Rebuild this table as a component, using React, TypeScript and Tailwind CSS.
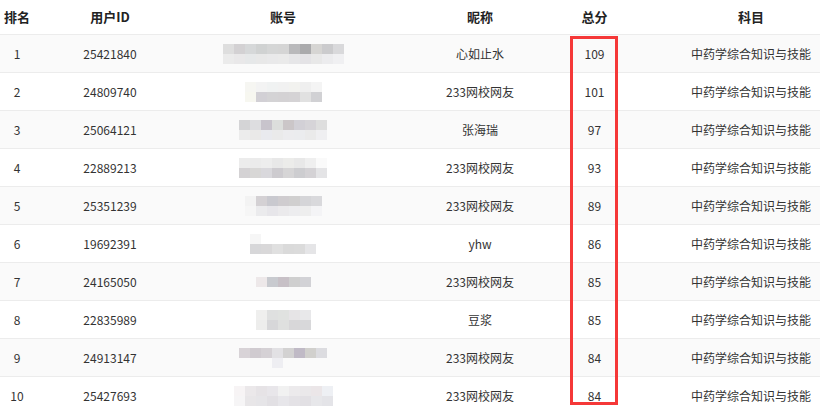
const rows = [
  { rank: 1, id: "25421840", nick: "心如止水", score: 109, top: ["#dedede", "#d3d1d3", "#d6d8d9", "#d0d2d2", "#d5d6d6", "#d5d5d5", "#b9b9bb", "#aaaaac", "#d6d5d3", "#cbcbcd", "#d9d9db"], bot: ["#ebebeb", "#e9e8e9", "#e6e8e9", "#e8e8e8", "#e9e9ea", "#eaeaea", "#e6e6e8", "#e4e3e6", "#e8e8e8", "#ececee", "#f0f0f2"] },
  { rank: 2, id: "24809740", nick: "233网校网友", score: 101, top: ["#f6f6f2", "#f3f3f3", "#f0f2f2", "#f1f1f1", "#f2f2ef", "#efefef", "#f4f4f4"], bot: ["#f7f7f0", "#d2d0d5", "#d4d3d5", "#d4d2d4", "#d5d3d5", "#e1e1e1", "#d1d1d4"] },
  { rank: 3, id: "25064121", nick: "张海瑞", score: 97, top: ["#d4d4d6", "#dddde0", "#c8c4cc", "#dcdedc", "#cbc6c8", "#d2d0d6", "#d6d4d8", "#dedede"], bot: ["#ececec", "#eae9e8", "#e9eaee", "#eaeaea", "#ececee", "#ebecee", "#eaeaea", "#efeff1"] },
  { rank: 4, id: "22889213", nick: "233网校网友", score: 93, top: ["#ececec", "#ebebeb", "#ededed", "#e8e8e8", "#ececea", "#e8e8e8", "#efefef", "#fafafa"], bot: ["#d4d2d4", "#d8d7d6", "#d9d8dc", "#cdcbcf", "#d6d5d6", "#cdcdd0", "#d4d2d5", "#e4e4e6"] },
  { rank: 5, id: "25351239", nick: "233网校网友", score: 89, top: ["#f3f3f3", "#d4d1d4", "#c9c9cf", "#cfcccf", "#d0cfcf", "#d5d5d8", "#d9d9dc"], bot: ["#f6f6f6", "#ebebed", "#e7e6ea", "#ebeaec", "#ededef", "#eeeeee", "#f4f4f6"] },
  { rank: 6, id: "19692391", nick: "yhw", score: 86, top: ["#f6f6f6", "#ffffff", "#ffffff", "#ffffff", "#ffffff", "#ffffff"], bot: ["#d7d7d9", "#d9d8d9", "#e0e0e0", "#dadada", "#dbdbdb", "#e5e5e7"] },
  { rank: 7, id: "24165050", nick: "233网校网友", score: 85, top: ["#ede8e9", "#c8cacf", "#c7c0c6", "#cfcfcf", "#d2d2d6"], bot: [] },
  { rank: 8, id: "22835989", nick: "豆浆", score: 85, top: ["#efefee", "#dfe0e0", "#e0e2e0", "#e6e4e6", "#e8e8ea"], bot: ["#ededec", "#d7d7d9", "#dfe0df", "#d8d7d9", "#d8d8da"] },
  { rank: 9, id: "24913147", nick: "233网校网友", score: 84, top: ["#d8d3d7", "#d0cbd0", "#d5d1d5", "#e2e1e4", "#d3d2d2", "#c0bac6", "#d1d0cd", "#dcdce0"], bot: ["#fafafa", "#fafafa", "#fafafa", "#eeeef2", "#fafafa", "#fafafa", "#fafafa", "#fafafa"] },
  { rank: 10, id: "25427693", nick: "233网校网友", score: 84, top: ["#f7f4f5", "#ebe8ea", "#e6e3e6", "#e8e6ea", "#f1f1f1", "#eceaec", "#eae8ea", "#ebe6e8", "#eef0f4"], bot: ["#f6f5f6", "#e8e6e8", "#e6e5e8", "#e2e0e4", "#e7e6ea", "#e4e2e6", "#e2e0e4", "#e7e7ea", "#e4e4e8"] },
];

const cols = "grid grid-cols-[34px_152px_194px_200px_60px_180px]";
const cell = "flex items-center justify-center";

const Mosaic = ({ top, bot }: { top: string[]; bot: string[] }) => (
  <div className="flex flex-col">
    <div className="flex">
      {top.map((c, i) => (
        <div key={i} className="w-[11px] h-[10px]" style={{ backgroundColor: c }} />
      ))}
    </div>
    {bot.length > 0 && (
      <div className="flex">
        {bot.map((c, i) => (
          <div key={i} className="w-[11px] h-[10px]" style={{ backgroundColor: c }} />
        ))}
      </div>
    )}
  </div>
);

const App = () => {
  return (
    <div
      className="relative w-[820px] h-[410px] overflow-hidden bg-white text-[12px] text-[#333]"
      style={{ fontFamily: '"Noto Sans CJK SC", "Noto Sans", sans-serif' }}
    >
      <div className={`${cols} h-[35px] border-b border-[#ececec] text-[13px] font-bold text-[#222]`}>
        <div className={cell}>排名</div>
        <div className={cell}>用户ID</div>
        <div className={cell}>账号</div>
        <div className={cell}>昵称</div>
        <div className={`${cell} pr-[31px]`}>总分</div>
        <div className={`${cell} pl-[42px]`}>科目</div>
      </div>
      {rows.map((r) => (
        <div
          key={r.rank}
          className={`${cols} h-[38px] border-b border-[#ececec] ${r.rank % 2 === 1 ? "bg-[#fafafa]" : "bg-white"}`}
        >
          <div className={cell}>{r.rank}</div>
          <div className={cell}>{r.id}</div>
          <div className={cell}>
            <Mosaic top={r.top} bot={r.bot} />
          </div>
          <div className={cell}>{r.nick}</div>
          <div className={`${cell} pr-[31px]`}>{r.score}</div>
          <div className={`${cell} pl-[42px]`}>中药学综合知识与技能</div>
        </div>
      ))}
      <div className="absolute left-[570px] top-[36px] w-[48px] h-[369px] border-[3px] border-[#f53838]" />
    </div>
  );
};

export default App;
